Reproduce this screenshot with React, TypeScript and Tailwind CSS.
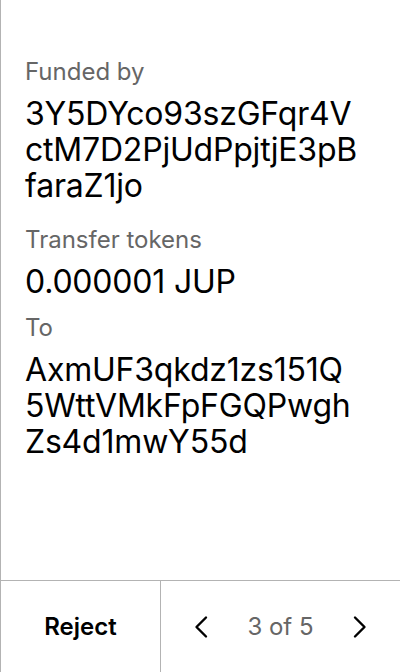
const font = { fontFamily: 'Inter, "Noto Sans", sans-serif' }

function Field({ label, lines, className = '' }: { label: string; lines: string[]; className?: string }) {
  return (
    <div className={className}>
      <div className="text-[24px] leading-[28px] text-[#666666]">{label}</div>
      <div className="mt-[10px] text-[32px] leading-[36px] tracking-[-0.2px] text-black">
        {lines.map(l => (
          <div key={l}>{l}</div>
        ))}
      </div>
    </div>
  )
}

function Chevron({ dir }: { dir: 'left' | 'right' }) {
  return (
    <svg width="16" height="24" viewBox="0 0 16 24" fill="none" stroke="black" strokeWidth="2.4" strokeLinecap="round" strokeLinejoin="round">
      {dir === 'left' ? <path d="M13 2.5 L3.5 12 L13 21.5" /> : <path d="M3 2.5 L12.5 12 L3 21.5" />}
    </svg>
  )
}

export default function App() {
  return (
    <div className="flex h-[672px] w-[400px] flex-col border-l border-[#b3b3b3] bg-white" style={font}>
      <div className="flex-1 px-6 pt-[58px]">
        <Field label="Funded by" lines={['3Y5DYco93szGFqr4V', 'ctM7D2PjUdPpjtjE3pB', 'faraZ1jo']} />
        <Field className="mt-[22px]" label="Transfer tokens" lines={['0.000001 JUP']} />
        <Field className="mt-[14px]" label="To" lines={['AxmUF3qkdz1zs151Q', '5WttVMkFpFGQPwgh', 'Zs4d1mwY55d']} />
      </div>
      <div className="grid h-[92px] grid-cols-[160px_1fr] border-t border-[#b3b3b3]">
        <button className="flex items-center justify-center border-r border-[#b3b3b3] text-[24px] font-semibold text-black">
          Reject
        </button>
        <div className="flex items-center justify-between px-8">
          <Chevron dir="left" />
          <span className="text-[24px] text-[#666666]">3 of 5</span>
          <Chevron dir="right" />
        </div>
      </div>
    </div>
  )
}
